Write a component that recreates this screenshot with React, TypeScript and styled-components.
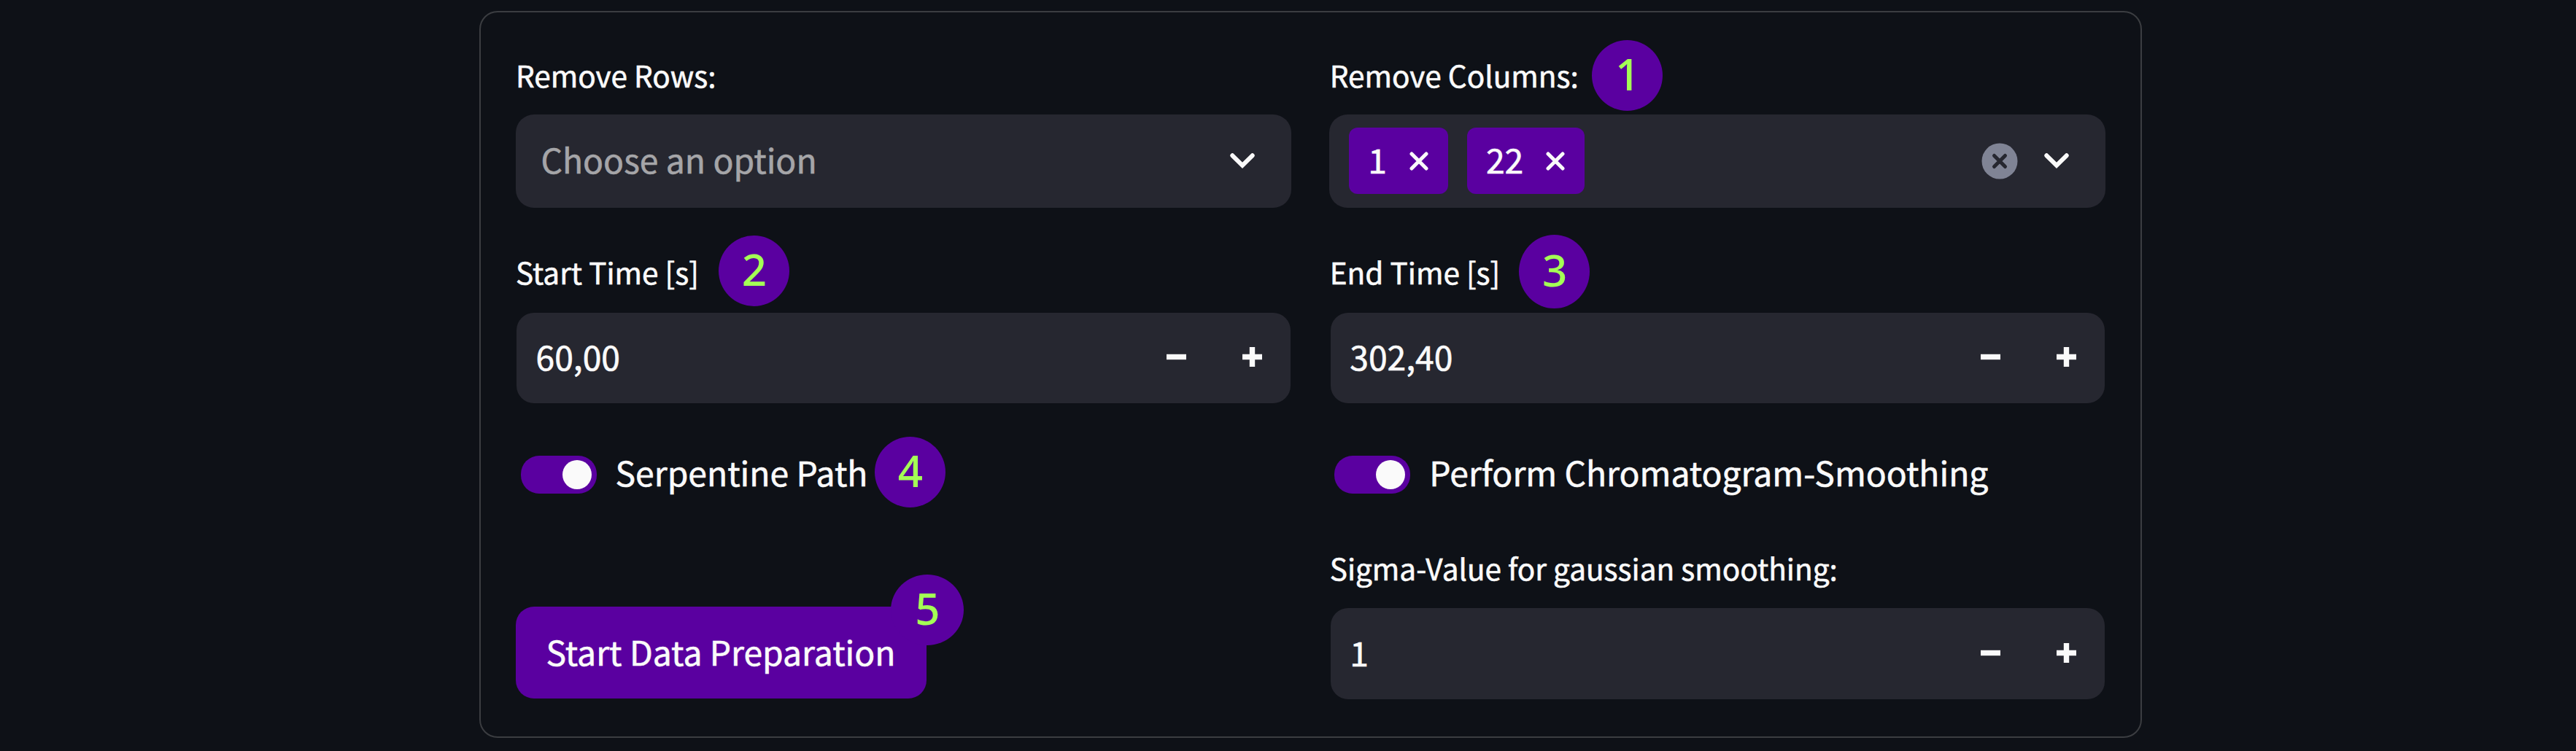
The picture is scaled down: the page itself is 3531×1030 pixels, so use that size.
import React, { useState } from "react";
import styled, { createGlobalStyle } from "styled-components";

const color = {
  page: "#0e1117",
  field: "#262730",
  border: "#3b3d41",
  text: "#fafafa",
  muted: "#a5a5a8",
  accent: "#5a00a0",
  lime: "#a4ff55",
  clear: "#808495",
};

const GlobalStyle = createGlobalStyle`
  *, *::before, *::after { box-sizing: border-box; }
  body {
    margin: 0;
    background: ${color.page};
    color: ${color.text};
    font-family: "Noto Sans CJK SC", "Noto Sans", sans-serif;
    font-size: 46.25px;
    line-height: 76px;
    -webkit-text-stroke: 0.6px currentColor;
  }
`;

const Page = styled.main`
  height: 1030px;
  padding: 15px 595px 0 657px;
  overflow: hidden;
`;

const Card = styled.section`
  display: grid;
  grid-template-columns: 1fr 1fr;
  column-gap: 52px;
  height: 996.5px;
  padding: 48px 48px 48px 47.5px;
  border: 2px solid ${color.border};
  border-radius: 25px;
`;

const Column = styled.div`
  display: flex;
  flex-direction: column;
  gap: 50.5px;
  min-width: 0;
`;

const Field = styled.div`
  position: relative;
  display: flex;
  flex-direction: column;
  gap: 16px;
`;

const Label = styled.label`
  height: 76px;
  padding-left: 0.5px;
  font-size: 40.5px;
  white-space: nowrap;
`;

const Select = styled.div`
  display: flex;
  align-items: center;
  height: 127.5px;
  padding: 0 50px 0 27px;
  border-radius: 25px;
  background: ${color.field};
`;

const Placeholder = styled.span`
  padding: 0 0 5px 8px;
  color: ${color.muted};
`;

const Chips = styled.div`
  display: flex;
  gap: 26px;
`;

const Chip = styled.span`
  display: flex;
  align-items: center;
  justify-content: space-between;
  height: 91px;
  padding: 0 27px 0 26px;
  gap: 31px;
  border-radius: 12px;
  background: ${color.accent};
`;

const ChipText = styled.span`
  padding-bottom: 5px;
`;

const Actions = styled.div`
  display: flex;
  align-items: center;
  gap: 36px;
  margin-left: auto;
`;

const Icon = styled.svg`
  display: block;
  flex: none;
`;

const NumberBox = styled.div`
  display: flex;
  align-items: center;
  height: 124.5px;
  margin: 1.5px;
  padding-left: 26.5px;
  border-radius: 24px;
  background: ${color.field};
`;

const NumberText = styled.span`
  flex: 1;
  padding-bottom: 5px;
`;

const Step = styled.button`
  display: flex;
  align-items: center;
  justify-content: center;
  width: 104px;
  height: 100%;
  padding: 0 0 2px;
  border: 0;
  background: transparent;
  color: inherit;
`;

const ToggleRow = styled.div`
  position: relative;
  display: flex;
  align-items: center;
  height: 85px;
  padding: 6px 0 0 7px;
  gap: 26px;
  white-space: nowrap;
`;

const Track = styled.button<{ $on: boolean }>`
  display: flex;
  align-items: center;
  justify-content: ${(p) => (p.$on ? "flex-end" : "flex-start")};
  width: 104px;
  height: 52px;
  padding: 0 7px;
  border: 0;
  border-radius: 25px;
  background: ${(p) => (p.$on ? color.accent : color.field)};
`;

const Knob = styled.span`
  width: 40px;
  height: 40px;
  border-radius: 50%;
  background: ${color.text};
`;

const ToggleText = styled.span`
  padding-bottom: 7px;
`;

const ButtonSlot = styled.div`
  position: relative;
  display: flex;
  padding-top: 91px;
`;

const PrimaryButton = styled.button`
  width: 563px;
  height: 126px;
  padding: 0 0 4px;
  border: 0;
  border-radius: 25px;
  background: ${color.accent};
  color: ${color.text};
  font: inherit;
  white-space: nowrap;
`;

const Badge = styled.span<{ $left: number; $top: number; $w?: number; $h?: number }>`
  position: absolute;
  left: ${(p) => p.$left}px;
  top: ${(p) => p.$top}px;
  display: flex;
  align-items: center;
  justify-content: center;
  width: ${(p) => p.$w ?? 97}px;
  height: ${(p) => p.$h ?? 97}px;
  padding: 0 0 5px 1px;
  border-radius: 50%;
  background: ${color.accent};
  color: ${color.lime};
  font-family: "Noto Sans", "Open Sans", sans-serif;
  font-size: 60px;
  font-weight: 500;
  -webkit-text-stroke: 0;
`;

const Chevron = () => (
  <Icon width="34" height="21" viewBox="0 0 34 21" fill="none">
    <path d="M3.3 3.3 L17 16.8 L30.7 3.3" stroke={color.text} strokeWidth="6" strokeLinecap="round" />
  </Icon>
);

const Cross = () => (
  <Icon width="26" height="26" viewBox="0 0 26 26">
    <path d="M3 3 L23 23 M23 3 L3 23" stroke={color.text} strokeWidth="5" strokeLinecap="round" />
  </Icon>
);

const ClearIcon = () => (
  <Icon width="50" height="50" viewBox="0 0 50 50">
    <circle cx="25" cy="25" r="24.5" fill={color.clear} />
    <path d="M17.5 17.5 L32.5 32.5 M32.5 17.5 L17.5 32.5" stroke={color.field} strokeWidth="5" strokeLinecap="round" />
  </Icon>
);

const Minus = () => (
  <Icon width="27" height="27" viewBox="0 0 27 27">
    <path d="M0 13.5 H27" stroke={color.text} strokeWidth="7.4" />
  </Icon>
);

const Plus = () => (
  <Icon width="27" height="27" viewBox="0 0 27 27">
    <path d="M0 13.5 H27 M13.5 0 V27" stroke={color.text} strokeWidth="7.4" />
  </Icon>
);

const NumberInput = ({ value }: { value: string }) => (
  <NumberBox>
    <NumberText>{value}</NumberText>
    <Step aria-label="Decrease">
      <Minus />
    </Step>
    <Step aria-label="Increase">
      <Plus />
    </Step>
  </NumberBox>
);

const Toggle = ({ label, children }: { label: string; children?: React.ReactNode }) => {
  const [on, setOn] = useState(true);
  return (
    <ToggleRow>
      <Track $on={on} onClick={() => setOn(!on)} aria-label={label}>
        <Knob />
      </Track>
      <ToggleText>{label}</ToggleText>
      {children}
    </ToggleRow>
  );
};

export default function App() {
  return (
    <>
      <GlobalStyle />
      <Page>
        <Card>
          <Column>
            <Field>
              <Label>Remove Rows:</Label>
              <Select>
                <Placeholder>Choose an option</Placeholder>
                <Actions>
                  <Chevron />
                </Actions>
              </Select>
            </Field>
            <Field>
              <Label>Start Time [s]</Label>
              <NumberInput value="60,00" />
              <Badge $left={278.5} $top={-12}>2</Badge>
            </Field>
            <Toggle label="Serpentine Path">
              <Badge $left={492.5} $top={-6}>4</Badge>
            </Toggle>
            <ButtonSlot>
              <PrimaryButton>Start Data Preparation</PrimaryButton>
              <Badge $left={514.5} $top={47.5} $w={100}>5</Badge>
            </ButtonSlot>
          </Column>
          <Column>
            <Field>
              <Label>Remove Columns:</Label>
              <Select>
                <Chips>
                  {["1", "22"].map((v) => (
                    <Chip key={v}>
                      <ChipText>{v}</ChipText>
                      <Cross />
                    </Chip>
                  ))}
                </Chips>
                <Actions>
                  <ClearIcon />
                  <Chevron />
                </Actions>
              </Select>
              <Badge $left={360} $top={-10}>1</Badge>
            </Field>
            <Field>
              <Label>End Time [s]</Label>
              <NumberInput value="302,40" />
              <Badge $left={260} $top={-13} $h={101}>3</Badge>
            </Field>
            <Toggle label="Perform Chromatogram-Smoothing" />
            <Field>
              <Label>Sigma-Value for gaussian smoothing:</Label>
              <NumberInput value="1" />
            </Field>
          </Column>
        </Card>
      </Page>
    </>
  );
}
